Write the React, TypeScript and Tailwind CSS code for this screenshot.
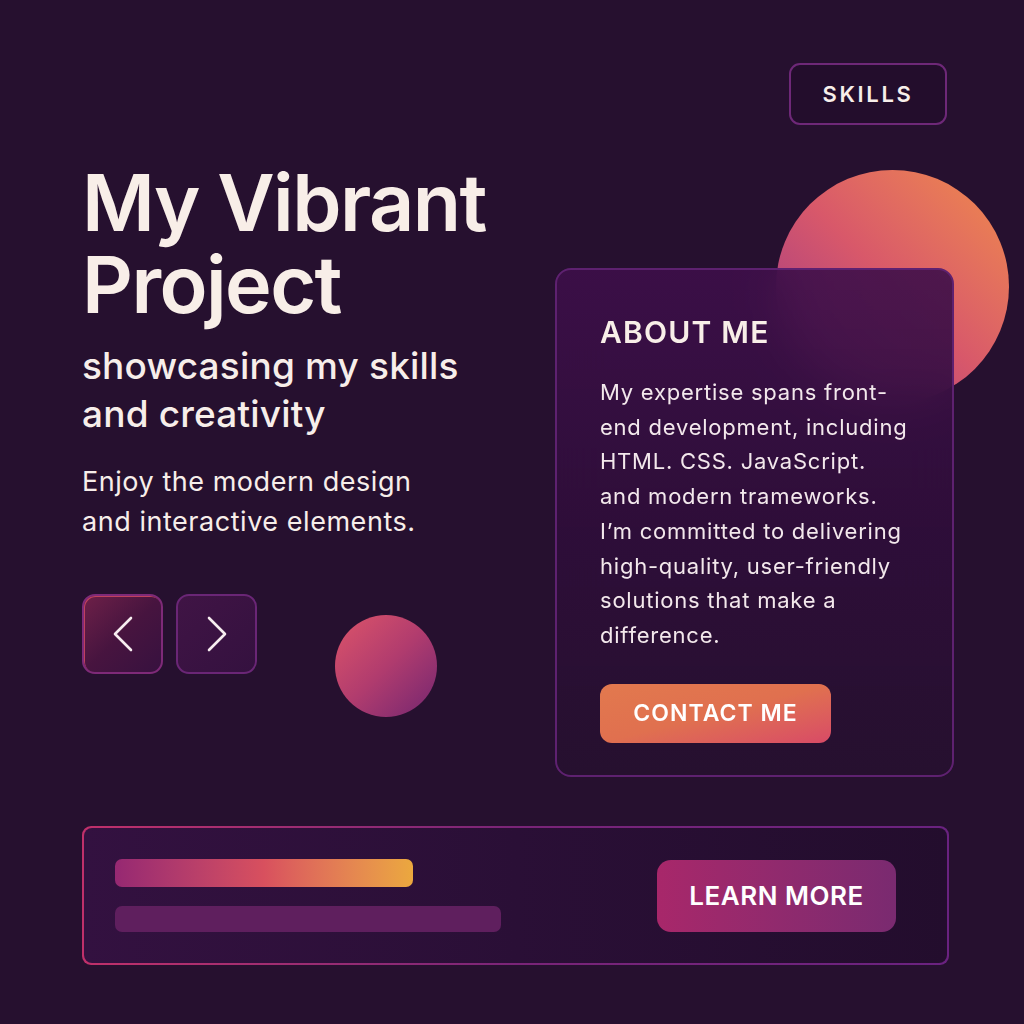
import React from 'react';

const aboutLines = [
  'My expertise spans front-',
  'end development, including',
  'HTML. CSS. JavaScript.',
  'and modern trameworks.',
  'I\u2019m committed to delivering',
  'high-quality, user-friendly',
  'solutions that make a',
  'difference.',
];

function Chevron({ dir }: { dir: 'left' | 'right' }) {
  return (
    <svg width="20" height="36" viewBox="0 0 20 36" fill="none" stroke="#f7eef0" strokeWidth={2.6} strokeLinecap="round" strokeLinejoin="round">
      {dir === 'left' ? <polyline points="18,2 2,18 18,34" /> : <polyline points="2,2 18,18 2,34" />}
    </svg>
  );
}

export default function App() {
  return (
    <div
      className="relative w-[1024px] h-[1024px] overflow-hidden bg-[#26102f] text-[#f7eeea]"
      style={{ fontFamily: 'Inter, "Noto Sans", sans-serif' }}
    >
      {/* Top bar */}
      <div className="flex justify-end pt-[63px] pr-[77px]">
        <button className="w-[158px] h-[62px] rounded-[11px] border-2 border-[#6e2878] bg-[#230d2c] text-[22px] font-semibold tracking-[0.12em] text-[#f7eeea]">
          SKILLS
        </button>
      </div>

      <div className="flex pl-[82px]">
        {/* Left column */}
        <div className="w-[473px] pt-[36px]">
          <h1 className="text-[79px] leading-[82px] font-semibold tracking-[-0.02em] text-[#f8eee8]">
            My Vibrant
            <br />
            Project
          </h1>
          <p className="mt-[17px] text-[37px] leading-[48px] font-medium tracking-[0.005em]">
            showcasing my skills
            <br />
            and creativity
          </p>
          <p className="mt-[24px] text-[27px] leading-[40px] font-normal tracking-[0.02em]">
            Enjoy the modern design
            <br />
            and interactive elements.
          </p>

          <div className="mt-[52px] flex items-start">
            <div className="flex gap-[13px]">
              <button className="w-[81px] h-[80px] rounded-[13px] border-2 border-[#7e2a78] bg-gradient-to-br from-[#6e2048] via-[#47143f] to-[#37113f] flex items-center justify-center shadow-[inset_1px_1px_0_#c0405c]">
                <Chevron dir="left" />
              </button>
              <button className="w-[81px] h-[80px] rounded-[13px] border-2 border-[#6a2676] bg-gradient-to-br from-[#401445] to-[#34113f] flex items-center justify-center">
                <Chevron dir="right" />
              </button>
            </div>
            <div className="ml-[78px] mt-[21px] w-[102px] h-[102px] rounded-full bg-gradient-to-br from-[#de5468] via-[#b13c6e] to-[#74246f]" />
          </div>
        </div>

        {/* Right column */}
        <div className="relative mt-[143px] w-[399px]">
          <div className="absolute left-[221px] top-[-98px] w-[233px] h-[233px] rounded-full bg-gradient-to-bl from-[#f08a48] via-[#d8586a] to-[#9c3384]" />
          <div className="relative h-[509px] rounded-[16px] border-2 border-[#5e2170] bg-gradient-to-b from-[#3e0f4a]/90 via-[#2f0e3a]/95 to-[#26102f] backdrop-blur-xl pl-[43px] pt-[45px]">
            <h2 className="text-[30px] leading-[35px] font-semibold tracking-[0.04em] text-[#f8eee8]">ABOUT ME</h2>
            <div className="mt-[25px] text-[22px] leading-[34.7px] font-normal tracking-[0.035em] text-[#f3e8ec]">
              {aboutLines.map((l) => (
                <div key={l} className="whitespace-nowrap">{l}</div>
              ))}
            </div>
            <button className="mt-[31px] w-[231px] h-[59px] rounded-[12px] bg-gradient-to-br from-[#e2794e] via-[#e0704f] to-[#d84a66] text-[23px] font-semibold tracking-[0.045em] text-white">
              CONTACT ME
            </button>
          </div>
        </div>
      </div>

      {/* Bottom panel */}
      <div className="mt-[49px] ml-[82px] w-[867px] rounded-[9px] p-[2px] bg-gradient-to-r from-[#c0306a] via-[#7a2478] to-[#6a2280]">
        <div className="h-[135px] rounded-[8px] bg-gradient-to-r from-[#331140] via-[#2a0f36] to-[#230d2d] flex items-center justify-between pl-[31px] pr-[51px]">
          <div className="flex flex-col gap-[19px]">
            <div className="w-[298px] h-[28px] rounded-[7px] bg-gradient-to-r from-[#962872] via-[#d8505e] to-[#eba83e]" />
            <div className="w-[386px] h-[26px] rounded-[7px] bg-[#5f1f5e]" />
          </div>
          <button className="w-[239px] h-[72px] rounded-[14px] bg-gradient-to-r from-[#a8276a] to-[#7a2a70] text-[26px] font-semibold tracking-[0.02em] text-white">
            LEARN MORE
          </button>
        </div>
      </div>
    </div>
  );
}
